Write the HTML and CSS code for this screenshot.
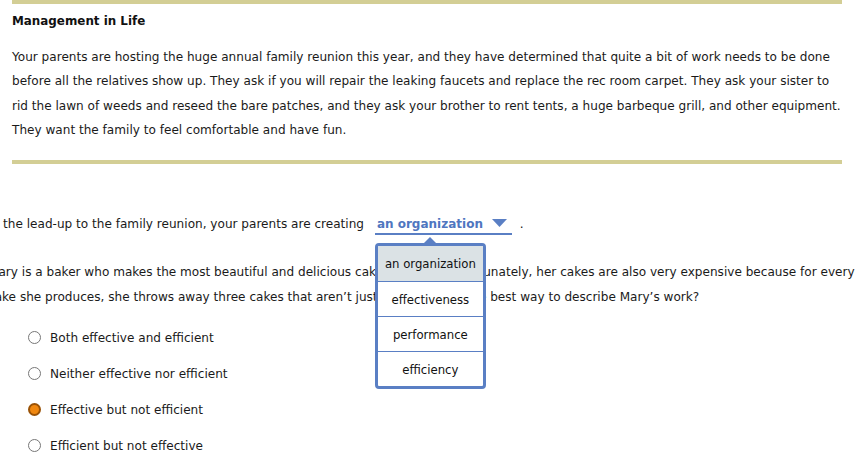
FILE: index.html
```html
<!DOCTYPE html>
<html>
<head>
<meta charset="utf-8">
<link rel="stylesheet" href="styles.css">
</head>
<body>
<div class="page">
  <section class="passage">
    <div class="bar"></div>
    <h1 class="title">Management in Life</h1>
    <p class="text">Your parents are hosting the huge annual family reunion this year, and they have determined that quite a bit of work needs to be done before all the relatives show up. They ask if you will repair the leaking faucets and replace the rec room carpet. They ask your sister to rid the lawn of weeds and reseed the bare patches, and they ask your brother to rent tents, a huge barbeque grill, and other equipment. They want the family to feel comfortable and have fun.</p>
    <div class="bar bar-bottom"></div>
  </section>

  <section class="questions">
    <p class="q1">In the lead-up to the family reunion, your parents are creating
      <span class="select">
        <span class="select-value">an organization</span>
        <svg class="caret" width="15" height="8" viewBox="0 0 15 8"><path d="M0 0 H15 L7.5 8 Z" fill="#5a7fc4"/></svg>
        <span class="menu">
          <span class="menu-item active">an organization</span>
          <span class="menu-item">effectiveness</span>
          <span class="menu-item">performance</span>
          <span class="menu-item">efficiency</span>
        </span>
      </span><span class="dot">.</span>
    </p>

    <p class="q2">Mary is a baker who makes the most beautiful and delicious cakes in town. Unfortunately, her cakes are also very expensive because for every cake she produces, she throws away three cakes that aren’t just right. What is the best way to describe Mary’s work?</p>

    <ul class="options">
      <li class="option"><span class="radio"></span>Both effective and efficient</li>
      <li class="option"><span class="radio"></span>Neither effective nor efficient</li>
      <li class="option"><span class="radio checked"></span>Effective but not efficient</li>
      <li class="option"><span class="radio"></span>Efficient but not effective</li>
    </ul>
  </section>
</div>
</body>
</html>
```

FILE: styles.css
```css
html, body {
  margin: 0;
  padding: 0;
  background: #ffffff;
}
body {
  font-family: "DejaVu Sans", Verdana, sans-serif;
  font-size: 12.08px;
  color: #1a1a1a;
  overflow: hidden;
}
.page {
  width: 857px;
  height: 460px;
  overflow: hidden;
}
.passage {
  margin: 0 15px 0 12px;
}
.bar {
  height: 4px;
  background: #d3ce95;
}
.bar-bottom {
  margin-top: 17px;
}
.title {
  margin: 9px 0 0 0;
  font-size: 11.9px;
  line-height: 16px;
  font-weight: bold;
  color: #111;
}
.text {
  margin: 16px -4px 0 0;
  line-height: 24.4px;
}
.questions {
  margin-left: -12px;
  width: 890px;
}
.q1 {
  margin: 48px 0 0 0;
  line-height: 25px;
  white-space: nowrap;
}
.select {
  position: relative;
  display: inline-block;
  margin-left: 7px;
  padding: 0 5px 0 2px;
  border-bottom: 2px solid #5a7fc4;
  line-height: 18px;
}
.select-value {
  font-weight: bold;
  font-size: 12px;
  color: #4f76c0;
}
.caret {
  margin-left: 5px;
  vertical-align: 1px;
}
.dot {
  margin-left: 8px;
}
.menu {
  position: absolute;
  left: 0;
  top: 28px;
  width: 105px;
  border: 3px solid #5a7fc4;
  border-radius: 4px;
  background: #fff;
  display: flex;
  flex-direction: column;
  font-family: "DejaVu Sans Condensed", "DejaVu Sans", sans-serif;
  font-size: 13px;
  color: #111;
  z-index: 2;
}
.menu::before {
  content: "";
  position: absolute;
  left: 46px;
  top: -9px;
  border-left: 6px solid transparent;
  border-right: 6px solid transparent;
  border-bottom: 6px solid #5a7fc4;
}
.menu-item {
  display: block;
  height: 34px;
  line-height: 35px;
  text-align: center;
  border-top: 1px solid #5a7fc4;
}
.menu-item:first-child {
  border-top: none;
  height: 35px;
}
.menu-item.active {
  background: #dbe2e5;
}
.q2 {
  margin: 23px 0 0 0;
  line-height: 25px;
  width: 876px;
}
.options {
  list-style: none;
  margin: 10px 0 0 0;
  padding: 0 0 0 40px;
}
.option {
  display: flex;
  align-items: center;
  height: 36px;
}
.radio {
  width: 11px;
  height: 11px;
  border: 1px solid #777;
  border-radius: 50%;
  background: #fff;
  margin-right: 9px;
  box-sizing: content-box;
}
.radio.checked {
  width: 9px;
  height: 9px;
  border: 2px solid #9a5206;
  background: #f0870f;
}
```
